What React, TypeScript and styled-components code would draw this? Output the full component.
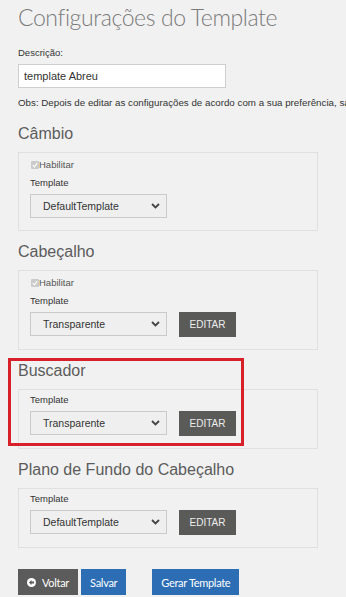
import React from "react";
import styled, { createGlobalStyle } from "styled-components";

const Global = createGlobalStyle`
  html, body { margin: 0; padding: 0; background: #f1f1f1; }
  body { overflow: hidden; font-family: "Liberation Sans", Arial, sans-serif; color: #333; }
`;

const Page = styled.div`
  padding: 0 0 0 18px;
  width: 328px;
`;

const Title = styled.h1`
  margin: 2px 0 15px;
  font-family: Lato, "Liberation Sans", sans-serif;
  font-weight: 300;
  font-size: 23px;
  letter-spacing: -0.4px;
  line-height: 30px;
  color: #7a7a7a;
  white-space: nowrap;
`;

const SmallLabel = styled.div`
  font-size: 9.5px;
  line-height: 12px;
  color: #333;
  margin-bottom: 5px;
`;

const TextInput = styled.div`
  box-sizing: border-box;
  width: 208px;
  height: 24px;
  border: 1px solid #cfcfcf;
  background: #fff;
  padding: 0 5px;
  font-size: 11px;
  line-height: 22px;
  color: #333;
`;

const Obs = styled.div`
  margin: 9px 0 15px;
  font-size: 9.75px;
  line-height: 12px;
  color: #333;
  white-space: nowrap;
`;

const Section = styled.section<{ $first?: boolean }>`
  position: relative;
  margin-top: ${(p) => (p.$first ? "0" : "11px")};
`;

const Heading = styled.h3`
  margin: 0 0 8px;
  font-weight: normal;
  font-size: 16px;
  line-height: 20px;
  color: #5c5c5c;
  white-space: nowrap;
`;

const Panel = styled.div`
  box-sizing: border-box;
  width: 300px;
  border: 1px solid #e0e0e0;
  padding: 4px 11px 12px;
`;

const CheckRow = styled.div`
  display: flex;
  align-items: center;
  margin: 2px 0 6px;
  font-size: 9.5px;
  line-height: 12px;
  color: #555;
`;

const CheckBox = styled.span`
  display: inline-flex;
  align-items: center;
  justify-content: center;
  width: 8px;
  height: 8px;
  margin-left: 1px;
  background: #cbcbcb;
  border-radius: 1px;
`;

const Row = styled.div`
  display: flex;
  align-items: flex-start;
  gap: 12px;
`;

const Select = styled.div`
  box-sizing: border-box;
  width: 137px;
  height: 24px;
  border: 1px solid #cacaca;
  background: #efefef;
  display: flex;
  align-items: center;
  justify-content: space-between;
  padding: 0 6px 0 12px;
  font-size: 10.5px;
  color: #333;
`;

const EditButton = styled.div`
  box-sizing: border-box;
  width: 57px;
  height: 25px;
  background: #5a5a58;
  color: #eee;
  font-size: 10px;
  display: flex;
  align-items: center;
  justify-content: center;
`;

const Highlight = styled.div`
  position: absolute;
  left: -10px;
  top: -3px;
  width: 236px;
  height: 88px;
  box-sizing: border-box;
  border: 3px solid #d8202a;
  pointer-events: none;
`;

const Actions = styled.div`
  display: flex;
  margin-top: 21px;
`;

const ActionButton = styled.div<{ $variant: "dark" | "blue"; $ml?: number }>`
  box-sizing: border-box;
  height: 26px;
  padding: 0 9px;
  margin-left: ${(p) => p.$ml ?? 0}px;
  display: flex;
  align-items: center;
  gap: 6px;
  font-family: Lato, "Liberation Sans", sans-serif;
  font-size: 11px;
  letter-spacing: -0.3px;
  color: #fff;
  background: ${(p) => (p.$variant === "dark" ? "#5b5b5b" : "#2c6db4")};
`;

const Chevron = () => (
  <svg width="9" height="6" viewBox="0 0 9 6">
    <path d="M1 1 L4.5 4.5 L8 1" fill="none" stroke="#444" strokeWidth="1.8" />
  </svg>
);

const Check = () => (
  <svg width="6" height="6" viewBox="0 0 6 6">
    <path d="M0.8 3.2 L2.4 4.8 L5.2 1.2" fill="none" stroke="#fff" strokeWidth="1.1" />
  </svg>
);

const BackIcon = () => (
  <svg width="9" height="9" viewBox="0 0 10 10">
    <circle cx="5" cy="5" r="5" fill="#fff" />
    <path d="M2.2 5 L5 2.3 L5 4 L7.8 4 L7.8 6 L5 6 L5 7.7 Z" fill="#5b5b5b" />
  </svg>
);

type Cfg = { title: string; habilitar?: boolean; value: string; edit?: boolean; highlight?: boolean };

const sections: Cfg[] = [
  { title: "Câmbio", habilitar: true, value: "DefaultTemplate" },
  { title: "Cabeçalho", habilitar: true, value: "Transparente", edit: true },
  { title: "Buscador", value: "Transparente", edit: true, highlight: true },
  { title: "Plano de Fundo do Cabeçalho", value: "DefaultTemplate", edit: true },
];

export default function App() {
  return (
    <>
      <Global />
      <Page>
        <Title>Configurações do Template</Title>
        <SmallLabel>Descrição:</SmallLabel>
        <TextInput>template Abreu</TextInput>
        <Obs>
          Obs: Depois de editar as configurações de acordo com a sua preferência, salve e clique em Gerar Template.
        </Obs>
        {sections.map((s, i) => (
          <Section key={s.title} $first={i === 0}>
            {s.highlight && <Highlight />}
            <Heading>{s.title}</Heading>
            <Panel>
              {s.habilitar && (
                <CheckRow>
                  <CheckBox>
                    <Check />
                  </CheckBox>
                  Habilitar
                </CheckRow>
              )}
              <SmallLabel>Template</SmallLabel>
              <Row>
                <Select>
                  <span>{s.value}</span>
                  <Chevron />
                </Select>
                {s.edit && <EditButton>EDITAR</EditButton>}
              </Row>
            </Panel>
          </Section>
        ))}
        <Actions>
          <ActionButton $variant="dark">
            <BackIcon />
            Voltar
          </ActionButton>
          <ActionButton $variant="blue" $ml={3}>
            Salvar
          </ActionButton>
          <ActionButton $variant="blue" $ml={26}>
            Gerar Template
          </ActionButton>
        </Actions>
      </Page>
    </>
  );
}
